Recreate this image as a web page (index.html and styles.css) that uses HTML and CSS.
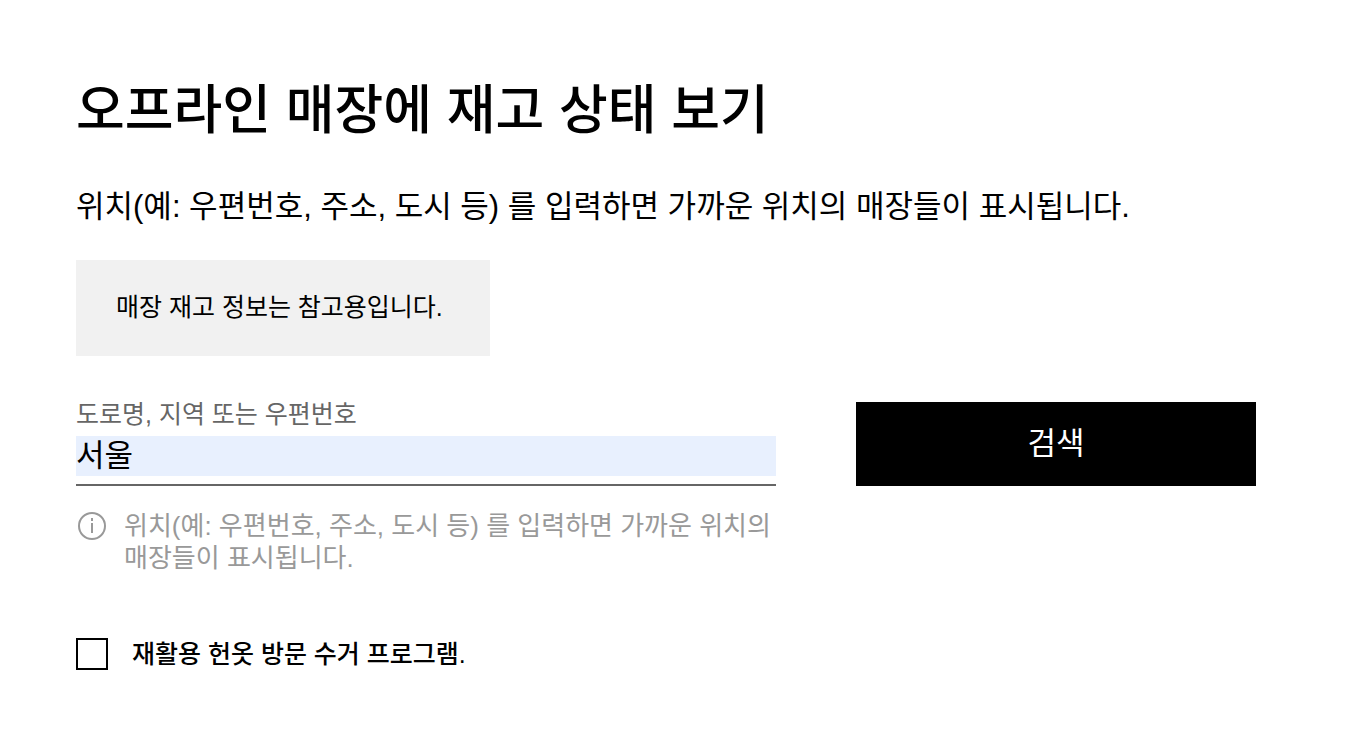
FILE: index.html
```html
<!DOCTYPE html>
<html lang="ko">
<head>
  <meta charset="UTF-8" />
  <meta name="viewport" content="width=device-width, initial-scale=1.0"/>
  <title>오프라인 매장에 재고 상태 보기</title>
  <link rel="stylesheet" href="styles.css">
</head>
<body>

  <main class="container">
    <h1>오프라인 매장에 재고 상태 보기</h1>
    <p class="intro">위치(예: 우편번호, 주소, 도시 등) 를 입력하면 가까운 위치의 매장들이 표시됩니다.</p>
    <div class="notice">매장 재고 정보는 참고용입니다.</div>

    <form class="search-form">
      <div class="search-row">
        <div class="field">
          <label for="location">도로명, 지역 또는 우편번호</label>
          <input type="text" id="location" value="서울" aria-describedby="location-help" />
        </div>
        <button type="submit">검색</button>

        <div class="help" id="location-help">
          <svg class="help-icon" viewBox="0 0 32 32" aria-hidden="true">
            <circle cx="16" cy="16" r="13" />
            <path d="M16 13v10M16 8v3" />
          </svg>
          <p>위치(예: 우편번호, 주소, 도시 등) 를 입력하면 가까운 위치의 매장들이 표시됩니다.</p>
        </div>
      </div>

      <div class="option">
        <input type="checkbox" id="recycle" />
        <label for="recycle">재활용 헌옷 방문 수거 프로그램.</label>
      </div>
    </form>
  </main>

</body>
</html>
```
FILE: styles.css
```css
* {
  box-sizing: border-box;
}

body {
  font-family: "Liberation Sans", "Noto Sans CJK KR", sans-serif;
  background-color: #fff;
  color: #000;
  margin: 0;
  word-break: keep-all;
}

.container {
  padding: 72px 116px 64px 76px;
}

h1 {
  margin: 0;
  font-size: 53px;
  line-height: 78px;
  font-weight: 500;
}

.intro {
  margin: 35px 0 31px;
  font-size: 31px;
  line-height: 44px;
}

.notice {
  width: fit-content;
  min-width: 414px;
  background-color: #f1f1f1;
  padding: 31px 40px 33px;
  font-size: 25px;
  line-height: 32px;
}

.search-row {
  display: grid;
  grid-template-columns: 7fr 4fr;
  column-gap: 80px;
  row-gap: 24px;
  margin-top: 46px;
}

.field {
  padding-bottom: 8px;
  border-bottom: 2px solid #666;
}

.field label {
  display: block;
  color: #666;
  font-size: 25px;
  line-height: 24px;
  margin-bottom: 10px;
}

.field input {
  display: block;
  width: 100%;
  height: 40px;
  padding: 0 0 8px;
  border: 0;
  border-radius: 0;
  background-color: #e8f0fe;
  color: #000;
  font-family: inherit;
  font-size: 31px;
  outline: none;
}

button {
  height: 84px;
  padding: 0 0 8px;
  border: 0;
  background-color: #000;
  color: #fff;
  font-family: inherit;
  font-size: 31px;
  cursor: pointer;
}

.help {
  display: flex;
  gap: 16px;
  color: #999;
  font-size: 26px;
  line-height: 32px;
}

.help p {
  margin: 0;
}

.help-icon {
  flex: none;
  width: 32px;
  height: 32px;
  fill: none;
  stroke: #999;
  stroke-width: 2;
}

.option {
  display: flex;
  align-items: center;
  gap: 24px;
  margin-top: 64px;
}

.option input {
  appearance: none;
  width: 32px;
  height: 32px;
  margin: 0;
  border: 2px solid #000;
  background-color: #fff;
}

.option input:checked {
  background-color: #000;
}

.option label {
  font-size: 25px;
  line-height: 32px;
  font-weight: 500;
}
```
